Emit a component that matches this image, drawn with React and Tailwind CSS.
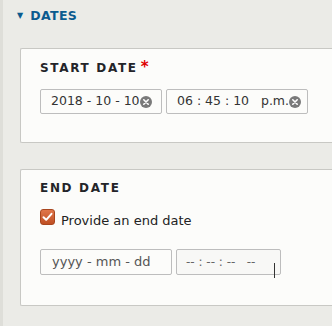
import React from 'react';

function ClearIcon() {
  return (
    <svg width="12" height="12" viewBox="0 0 12 12" className="shrink-0">
      <circle cx="6" cy="6" r="6" fill="#7a7a7a" />
      <path d="M3.8 3.8 L8.2 8.2 M8.2 3.8 L3.8 8.2" stroke="#fff" strokeWidth="1.6" strokeLinecap="round" />
    </svg>
  );
}

function CheckBox() {
  return (
    <div className="w-[15px] h-[16px] rounded-[3px] bg-gradient-to-b from-[#e0764a] to-[#bf4f22] border border-[#a8461e] flex items-center justify-center">
      <svg width="11" height="10" viewBox="0 0 11 10">
        <path d="M1.5 5.2 L4.2 7.8 L9.5 1.8" fill="none" stroke="#fff" strokeWidth="2" strokeLinecap="round" strokeLinejoin="round" />
      </svg>
    </div>
  );
}

export default function App() {
  return (
    <div className="w-[332px] h-[326px] overflow-hidden bg-[#ebebe7] text-[#222330] border-l-[3px] border-[#dedeD9]" style={{ fontFamily: '"DejaVu Sans", sans-serif' }}>
      <div className="flex items-center pl-[14px] pt-[6px] h-[20px] box-content">
        <span className="text-[#0b5b8f] text-[8px] mr-[7px]">▼</span>
        <span className="text-[#0b5b8f] font-bold text-[12.5px] tracking-[0.03em]">DATES</span>
      </div>

      <div className="ml-[17px] mt-[22px] h-[95px] bg-[#fcfcfa] border border-[#c8c8c4] border-r-0 rounded-tl-[2px] rounded-bl-[2px] pl-[19px] pt-[12px]">
        <div className="flex items-start h-[14px]">
          <span className="font-bold text-[12px] tracking-[0.14em] text-[#232429] leading-[14px]">START DATE</span>
          <span className="text-[#e00000] text-[15px] font-bold leading-[12px] ml-[3px]">*</span>
        </div>
        <div className="flex mt-[14px] gap-[4px]">
          <div className="w-[122px] h-[25px] border border-[#bdbdbd] rounded-[2px] bg-[#fcfcfa] flex items-center pl-[10px] pr-[10px] text-[12.5px] text-[#333]">
            <span className="flex-1 whitespace-pre">2018 - 10 - 10</span>
            <ClearIcon />
          </div>
          <div className="w-[142px] h-[25px] border border-[#bdbdbd] rounded-[2px] bg-[#fcfcfa] flex items-center pl-[10px] pr-[10px] text-[12.5px] text-[#333]">
            <span className="flex-1 whitespace-pre">06 : 45 : 10   p.m.</span>
            <ClearIcon />
          </div>
        </div>
      </div>

      <div className="ml-[17px] mt-[26px] h-[137px] bg-[#fcfcfa] border border-[#c8c8c4] border-r-0 rounded-tl-[2px] rounded-bl-[2px] pl-[19px] pt-[11px]">
        <div className="font-bold text-[12px] tracking-[0.14em] text-[#232429] leading-[14px]">END DATE</div>
        <div className="flex items-start mt-[14px] gap-[6px]">
          <CheckBox />
          <span className="text-[13px] text-[#222] leading-[16px] mt-[4px]">Provide an end date</span>
        </div>
        <div className="flex mt-[20px] gap-[4px]">
          <div className="w-[132px] h-[26px] border border-[#bdbdbd] rounded-[2px] bg-[#fcfcfa] flex items-center pl-[11px] text-[13px] text-[#555]">
            <span className="whitespace-pre">yyyy - mm - dd</span>
          </div>
          <div className="relative w-[105px] h-[26px] border border-[#bdbdbd] rounded-[2px] bg-[#f8f8f6] flex items-center pl-[9px] text-[12px] text-[#666]">
            <span className="whitespace-pre">-- : -- : --   --</span>
            <span className="absolute left-[97px] top-[13px] w-px h-[15px] bg-[#333]" />
          </div>
        </div>
      </div>
    </div>
  );
}
